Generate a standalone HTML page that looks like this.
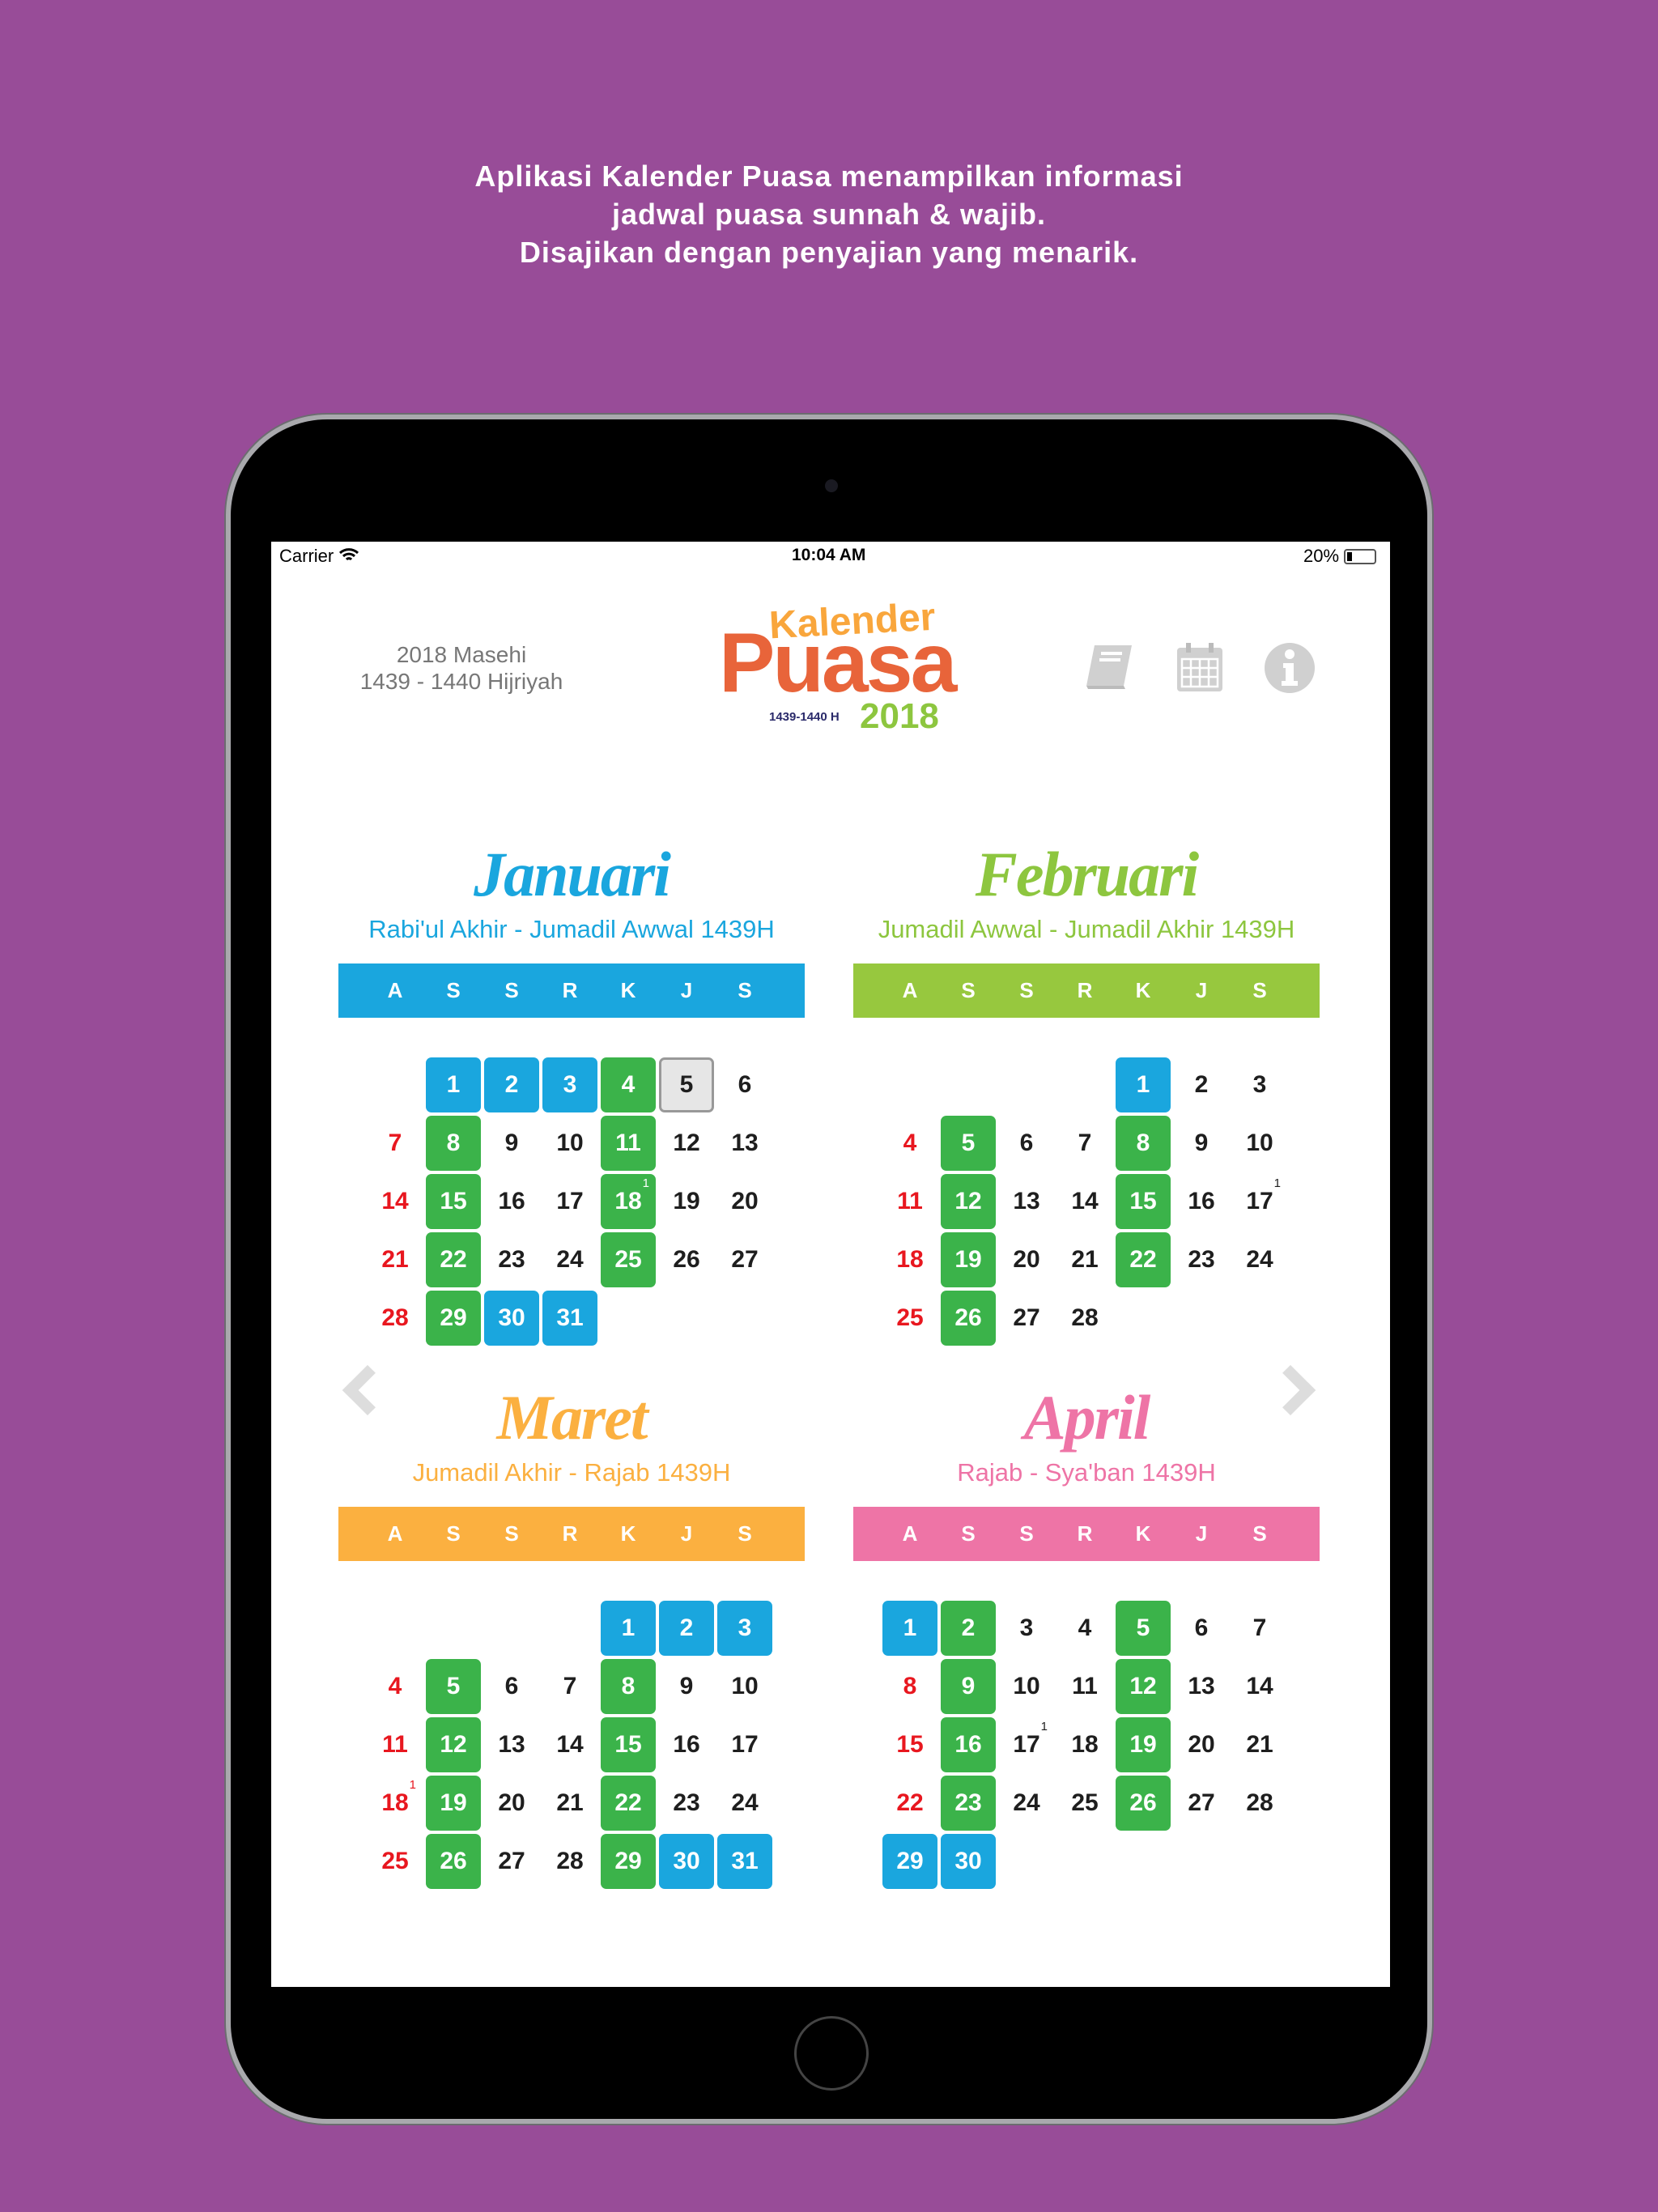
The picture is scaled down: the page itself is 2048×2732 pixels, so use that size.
<!DOCTYPE html>
<html><head><meta charset="utf-8"><style>
*{margin:0;padding:0;box-sizing:border-box}
body{width:2048px;height:2732px;background:#984c98;position:relative;overflow:hidden;font-family:"Liberation Sans",sans-serif}
.hd{position:absolute;left:0;width:2048px;top:194px;text-align:center;color:#fff;font-weight:bold;font-size:36px;line-height:47px;letter-spacing:1px}
.dev{position:absolute;left:279px;top:512px;width:1490px;height:2111px;background:#000;border-radius:125px;border:6px solid #a9a9ad;box-shadow:0 0 0 2px #6c6c70}
.cam{position:absolute;left:1019px;top:592px;width:16px;height:16px;border-radius:50%;background:#1a1a22}
.home{position:absolute;left:981px;top:2490px;width:92px;height:92px;border-radius:50%;border:3px solid #444}
.scr{position:absolute;left:335px;top:669px;width:1382px;height:1785px;background:#fff}
.a{position:absolute}
.sb{font-size:22px;color:#000;top:674px}
.ttl{position:absolute;text-align:center;font-family:"Liberation Serif",serif;font-style:italic;font-weight:bold;font-size:78px;width:576px;letter-spacing:-2px}
.sub{position:absolute;text-align:center;font-size:31px;width:576px}
.bar{position:absolute;width:576px;height:67px;display:grid;grid-template-columns:repeat(7,72px);padding-left:34px;align-items:center;color:#fff;font-weight:bold;font-size:26px;text-align:center}
.g{position:absolute;display:grid;grid-template-columns:repeat(7,72px);grid-auto-rows:72px}
.g div{margin:2px;border-radius:7px;display:flex;align-items:center;justify-content:center;font-weight:bold;font-size:30px;color:#1e1e1e;position:relative}
.g .b{background:#1aa6de;color:#fff}
.g .n{background:#3bb34a;color:#fff}
.g .r{color:#e8171f}
.g .t{background:#e6e6e6;border:3px solid #999}
.g sup{position:absolute;top:3px;right:8px;font-size:15px;font-weight:normal}
.arr{position:absolute;width:44px;height:44px;border-left:14px solid #ddd;border-bottom:14px solid #ddd}
</style></head><body>
<div class="hd">Aplikasi Kalender Puasa menampilkan informasi<br>jadwal puasa sunnah &amp; wajib.<br>Disajikan dengan penyajian yang menarik.</div>
<div class="dev"></div>
<div class="cam"></div>
<div class="home"></div>
<div class="scr"></div>
<div class="a sb" style="left:345px">Carrier <svg width="26" height="18" viewBox="0 0 26 18" style="vertical-align:-1px"><path d="M2 6a16 16 0 0 1 22 0M6 10a10 10 0 0 1 14 0M10 14a4 4 0 0 1 6 0" stroke="#000" stroke-width="3" fill="none"/></svg></div>
<div class="a sb" style="left:978px;font-weight:bold;font-size:21px">10:04 AM</div>
<div class="a sb" style="left:1610px">20% <span style="display:inline-block;width:40px;height:19px;border:2px solid #555;border-radius:4px;vertical-align:-3px;position:relative"><span style="position:absolute;left:2px;top:2px;width:6px;height:11px;background:#000"></span></span></div>
<div class="a" style="left:420px;top:792px;width:300px;text-align:center;font-size:28px;line-height:33px;color:#777">2018 Masehi<br>1439 - 1440 Hijriyah</div>
<div class="a" style="left:950px;top:740px;font-weight:bold;font-size:48px;color:#f9a63c;transform:rotate(-3deg)">Kalender</div>
<div class="a" style="left:888px;top:760px;font-weight:bold;font-size:104px;color:#e8643a;letter-spacing:-3px">Puasa</div>
<div class="a" style="left:950px;top:877px;font-size:15px;color:#2a2a6a;font-weight:bold">1439-1440 H</div>
<div class="a" style="left:1062px;top:860px;font-weight:bold;font-size:44px;color:#8dc63f">2018</div>
<svg class="a" style="left:1338px;top:793px" width="66" height="62" viewBox="0 0 66 62"><path d="M14 4h46l-10 50H4z" fill="#d0d0d0"/><path d="M4 54h46l2 4H6z" fill="#bbb"/><path d="M22 14h26M20 22h26" stroke="#fff" stroke-width="4"/></svg>
<svg class="a" style="left:1452px;top:792px" width="60" height="64" viewBox="0 0 60 64"><rect x="2" y="8" width="56" height="54" rx="4" fill="#d0d0d0"/><rect x="13" y="2" width="6" height="12" fill="#bbb"/><rect x="41" y="2" width="6" height="12" fill="#bbb"/><path d="M8 22h44v34H8zM19 22v34M30 22v34M41 22v34M8 33h44M8 44h44" stroke="#fff" stroke-width="2.5" fill="none"/></svg>
<svg class="a" style="left:1561px;top:793px" width="64" height="64" viewBox="0 0 64 64"><circle cx="32" cy="32" r="31" fill="#d0d0d0"/><circle cx="32" cy="15" r="6" fill="#fff"/><path d="M24 26h13v22h5v6H22v-6h5V32h-3z" fill="#fff"/></svg>
<div class="arr" style="left:432px;top:1695px;transform:rotate(45deg)"></div>
<div class="arr" style="left:1572px;top:1695px;transform:rotate(-135deg)"></div>

<div class="ttl" style="left:418px;top:1035px;color:#1aa6de">Januari</div>
<div class="sub" style="left:418px;top:1130px;color:#1aa6de">Rabi'ul Akhir - Jumadil Awwal 1439H</div>
<div class="bar" style="left:418px;top:1190px;background:#1aa6de"><span>A</span><span>S</span><span>S</span><span>R</span><span>K</span><span>J</span><span>S</span></div>
<div class="g" style="left:452px;top:1304px">
<i></i><div class="b">1</div><div class="b">2</div><div class="b">3</div><div class="n">4</div><div class="t">5</div><div>6</div>
<div class="r">7</div><div class="n">8</div><div>9</div><div>10</div><div class="n">11</div><div>12</div><div>13</div>
<div class="r">14</div><div class="n">15</div><div>16</div><div>17</div><div class="n">18<sup>1</sup></div><div>19</div><div>20</div>
<div class="r">21</div><div class="n">22</div><div>23</div><div>24</div><div class="n">25</div><div>26</div><div>27</div>
<div class="r">28</div><div class="n">29</div><div class="b">30</div><div class="b">31</div>
</div>

<div class="ttl" style="left:1054px;top:1035px;color:#8dc63f">Februari</div>
<div class="sub" style="left:1054px;top:1130px;color:#8dc63f">Jumadil Awwal - Jumadil Akhir 1439H</div>
<div class="bar" style="left:1054px;top:1190px;background:#97c83e"><span>A</span><span>S</span><span>S</span><span>R</span><span>K</span><span>J</span><span>S</span></div>
<div class="g" style="left:1088px;top:1304px">
<i></i><i></i><i></i><i></i><div class="b">1</div><div>2</div><div>3</div>
<div class="r">4</div><div class="n">5</div><div>6</div><div>7</div><div class="n">8</div><div>9</div><div>10</div>
<div class="r">11</div><div class="n">12</div><div>13</div><div>14</div><div class="n">15</div><div>16</div><div>17<sup>1</sup></div>
<div class="r">18</div><div class="n">19</div><div>20</div><div>21</div><div class="n">22</div><div>23</div><div>24</div>
<div class="r">25</div><div class="n">26</div><div>27</div><div>28</div>
</div>

<div class="ttl" style="left:418px;top:1706px;color:#fbb040">Maret</div>
<div class="sub" style="left:418px;top:1801px;color:#fbb040">Jumadil Akhir - Rajab 1439H</div>
<div class="bar" style="left:418px;top:1861px;background:#fbb040"><span>A</span><span>S</span><span>S</span><span>R</span><span>K</span><span>J</span><span>S</span></div>
<div class="g" style="left:452px;top:1975px">
<i></i><i></i><i></i><i></i><div class="b">1</div><div class="b">2</div><div class="b">3</div>
<div class="r">4</div><div class="n">5</div><div>6</div><div>7</div><div class="n">8</div><div>9</div><div>10</div>
<div class="r">11</div><div class="n">12</div><div>13</div><div>14</div><div class="n">15</div><div>16</div><div>17</div>
<div class="r">18<sup>1</sup></div><div class="n">19</div><div>20</div><div>21</div><div class="n">22</div><div>23</div><div>24</div>
<div class="r">25</div><div class="n">26</div><div>27</div><div>28</div><div class="n">29</div><div class="b">30</div><div class="b">31</div>
</div>

<div class="ttl" style="left:1054px;top:1706px;color:#ee74a6">April</div>
<div class="sub" style="left:1054px;top:1801px;color:#ee74a6">Rajab - Sya'ban 1439H</div>
<div class="bar" style="left:1054px;top:1861px;background:#ee74a6"><span>A</span><span>S</span><span>S</span><span>R</span><span>K</span><span>J</span><span>S</span></div>
<div class="g" style="left:1088px;top:1975px">
<div class="b">1</div><div class="n">2</div><div>3</div><div>4</div><div class="n">5</div><div>6</div><div>7</div>
<div class="r">8</div><div class="n">9</div><div>10</div><div>11</div><div class="n">12</div><div>13</div><div>14</div>
<div class="r">15</div><div class="n">16</div><div>17<sup>1</sup></div><div>18</div><div class="n">19</div><div>20</div><div>21</div>
<div class="r">22</div><div class="n">23</div><div>24</div><div>25</div><div class="n">26</div><div>27</div><div>28</div>
<div class="b">29</div><div class="b">30</div>
</div>
</body></html>
